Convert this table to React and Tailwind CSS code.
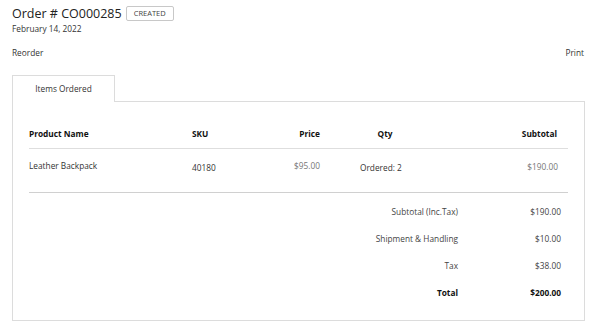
import React from 'react';

const items = [
  { name: 'Leather Backpack', sku: '40180', price: '$95.00', qty: 'Ordered: 2', subtotal: '$190.00' },
];

const totals = [
  { label: 'Subtotal (Inc.Tax)', value: '$190.00' },
  { label: 'Shipment & Handling', value: '$10.00' },
  { label: 'Tax', value: '$38.00' },
];

const App = () => {
  return (
    <div className="w-[602px] h-[335px] bg-white font-['Open_Sans',sans-serif] text-[#333] overflow-hidden">
      <div className="ml-3 w-[573px] pt-[6px]">
        {/* TITLE */}
        <div className="flex items-center gap-[4px] h-[15px]">
          <h1 className="text-[12.5px] leading-[15px] text-[#222]">Order # CO000285</h1>
          <span className="h-[15px] flex items-center border border-[#c8c8c8] rounded-[2px] px-[7px] text-[7.5px] text-[#444]">CREATED</span>
        </div>
        <div className="mt-[2px] text-[8.3px] leading-[12px]">February 14, 2022</div>

        {/* ACTIONS */}
        <div className="mt-[12px] flex justify-between text-[8.3px] leading-[12px]">
          <span>Reorder</span>
          <span className="mr-[1px]">Print</span>
        </div>

        {/* TABS */}
        <div className="mt-[16px] flex">
          <div className="w-[103px] h-[27px] border-t border-x border-[#dcdcdc] flex items-center justify-center text-[8.3px] text-[#333]">
            Items Ordered
          </div>
          <div className="flex-1 border-b border-[#dcdcdc]" />
        </div>

        {/* PANEL */}
        <div className="border-x border-b border-[#dcdcdc] pt-[19px] pl-[16px] pr-[16px] pb-[14px] text-[8.3px]">
          <div className="grid grid-cols-[163px_58px_70px_130px_1fr] h-[28px] items-center font-bold text-[#111] border-b border-[#dedede]">
            <div>Product Name</div>
            <div>SKU</div>
            <div className="text-right">Price</div>
            <div className="text-center">Qty</div>
            <div className="text-right pr-[11px]">Subtotal</div>
          </div>
          {items.map((item) => (
            <div key={item.sku} className="grid grid-cols-[163px_58px_70px_130px_1fr] h-[44px] items-start leading-[14px] border-b border-[#d0d0d0]">
              <div className="pt-[10px]">{item.name}</div>
              <div className="pt-[12px]">{item.sku}</div>
              <div className="pt-[10px] text-right text-[#777]">{item.price}</div>
              <div className="pt-[12px] pl-[40px]">{item.qty}</div>
              <div className="pt-[11px] text-right pr-[10px] text-[#777]">{item.subtotal}</div>
            </div>
          ))}

          {/* TOTALS */}
          <div className="pt-[5px] grid grid-cols-[429px_103px] leading-[27px]">
            {totals.map((t) => (
              <React.Fragment key={t.label}>
                <div className="text-right text-[#444]">{t.label}</div>
                <div className="text-right text-[#444]">{t.value}</div>
              </React.Fragment>
            ))}
            <div className="text-right font-bold text-[#111]">Total</div>
            <div className="text-right font-bold text-[#111]">$200.00</div>
          </div>
        </div>
      </div>
    </div>
  );
};

export default App;
